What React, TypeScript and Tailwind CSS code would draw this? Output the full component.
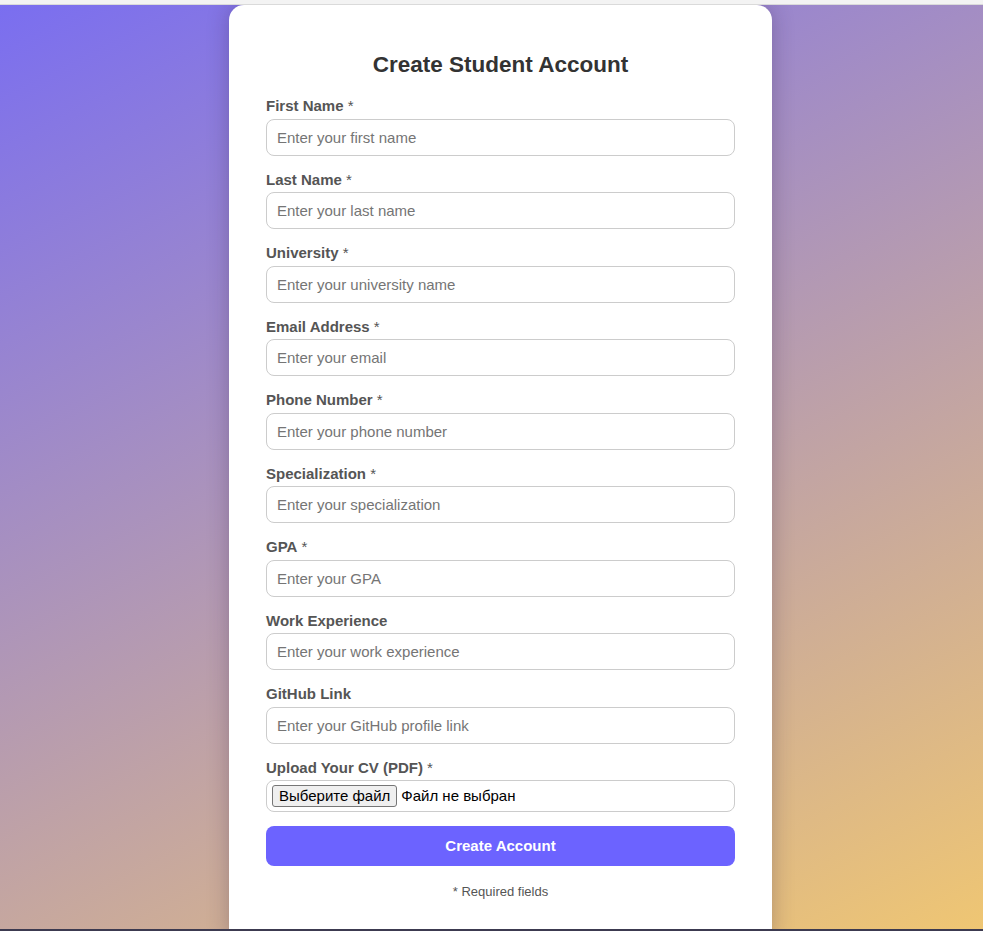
const fields = [
  { label: "First Name", required: true, placeholder: "Enter your first name" },
  { label: "Last Name", required: true, placeholder: "Enter your last name" },
  { label: "University", required: true, placeholder: "Enter your university name" },
  { label: "Email Address", required: true, placeholder: "Enter your email" },
  { label: "Phone Number", required: true, placeholder: "Enter your phone number" },
  { label: "Specialization", required: true, placeholder: "Enter your specialization" },
  { label: "GPA", required: true, placeholder: "Enter your GPA" },
  { label: "Work Experience", required: false, placeholder: "Enter your work experience" },
  { label: "GitHub Link", required: false, placeholder: "Enter your GitHub profile link" },
];

const Label = ({ text, required }: { text: string; required: boolean }) => (
  <label className="block mb-1 text-[15px] leading-[17.5px] font-bold text-[#555]">
    {text}
    {required && <span className="font-normal"> *</span>}
  </label>
);

export default function App() {
  return (
    <div className="h-[931px] flex flex-col overflow-hidden font-['Liberation_Sans',Arial,sans-serif]">
      <div className="h-[5px] shrink-0 bg-[#f3f3f3] border-b border-[#dadada]" />

      <div className="flex-1 min-h-0 overflow-hidden bg-[linear-gradient(153deg,#7a6ef0,#efc673)]">
        <div className="ml-[229px] w-[543px] h-[940px] bg-white rounded-[15px] shadow-[0_0_22px_rgba(40,20,60,0.28)] px-[37px] pt-[47px]">
          <h2 className="text-center text-[22.5px] leading-[26px] font-bold text-[#333] mb-[19px]">
            Create Student Account
          </h2>

          <form onSubmit={(e) => e.preventDefault()}>
            {fields.map((f) => (
              <div key={f.label} className="mb-[15px]">
                <Label text={f.label} required={f.required} />
                <input
                  type="text"
                  placeholder={f.placeholder}
                  className="block w-full h-[37px] px-[10px] border border-[#ccc] rounded-[8px] text-[15px] text-[#333] placeholder:text-[#757575] outline-none"
                />
              </div>
            ))}

            <div className="mb-[14px]">
              <Label text="Upload Your CV (PDF)" required={true} />
              <div className="flex items-center h-[32px] px-[5px] border border-[#ccc] rounded-[8px] text-[15px] text-black">
                <span className="h-[22px] px-[6px] flex items-center bg-[#efefef] border border-[#767676] rounded-[3px]">
                  Выберите файл
                </span>
                <span className="ml-[4px]">Файл не выбран</span>
              </div>
            </div>

            <button
              type="submit"
              className="block w-full h-[40px] bg-[#6c63ff] text-white text-[15px] font-bold rounded-[8px]"
            >
              Create Account
            </button>
          </form>

          <p className="mt-[18px] text-center text-[13px] leading-[15px] text-[#555]">* Required fields</p>
        </div>
      </div>

      <div className="h-[2px] shrink-0 bg-[#3c3a50]" />
    </div>
  );
}
